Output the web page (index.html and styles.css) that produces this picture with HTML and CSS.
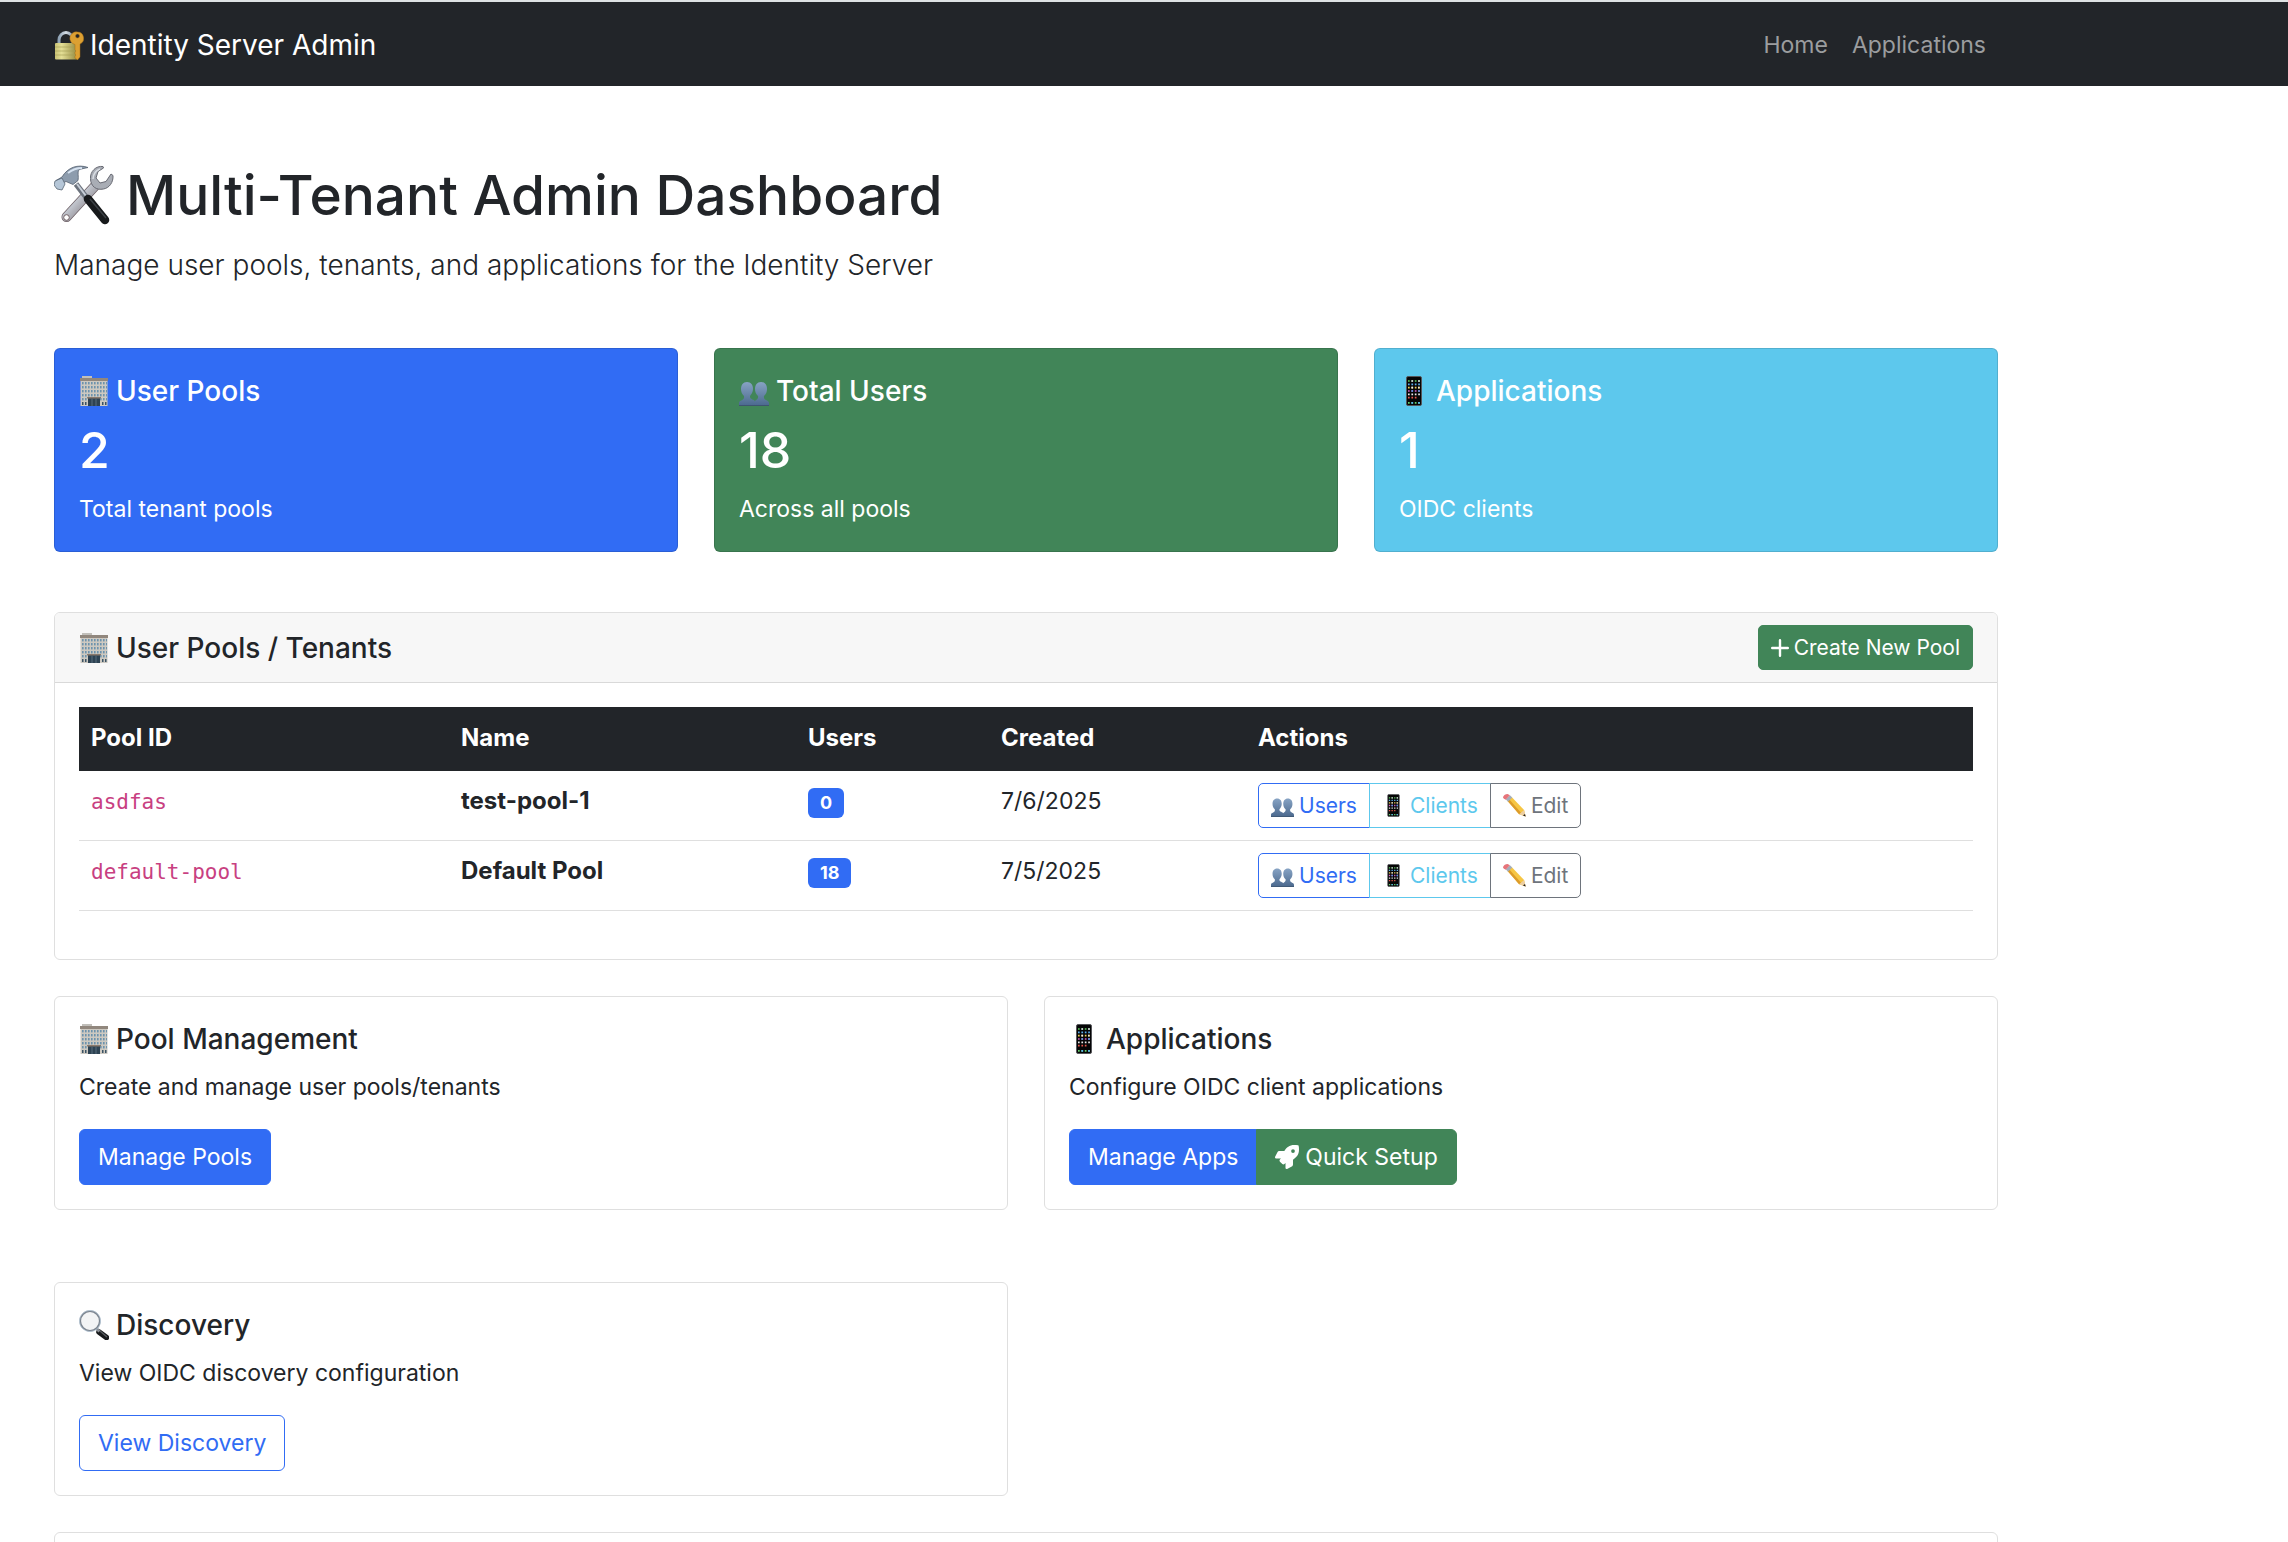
FILE: index.html
```html
<!DOCTYPE html>
<html lang="en">
<head>
<meta charset="utf-8">
<title>Identity Server Admin</title>
<link rel="stylesheet" href="styles.css">
</head>
<body>
<svg class="sprite" aria-hidden="true">
  <defs>
    <linearGradient id="steel" x1="0" y1="0" x2="1" y2="1"><stop offset="0" stop-color="#8e99a8"/><stop offset=".4" stop-color="#c3c7cf"/><stop offset="1" stop-color="#70666c"/></linearGradient>
    <linearGradient id="brass" x1="0" y1="0" x2="1" y2="0"><stop offset="0" stop-color="#c9c274"/><stop offset=".3" stop-color="#e3de95"/><stop offset="1" stop-color="#968c42"/></linearGradient>
    <linearGradient id="bust" x1="0" y1="0" x2="0" y2="1"><stop offset="0" stop-color="#87a3c4"/><stop offset="1" stop-color="#4a688d"/></linearGradient>
    <linearGradient id="shackle" x1="0" y1="0" x2="1" y2="0"><stop offset="0" stop-color="#8fa3b5"/><stop offset=".5" stop-color="#d5dde5"/><stop offset="1" stop-color="#8496a8"/></linearGradient>
    <pattern id="windows" width="3" height="4" patternUnits="userSpaceOnUse" x="2" y="5"><rect width="3" height="4" fill="#cdc9c1"/><rect x="1" y="1" width="1.6" height="2.4" fill="#6d93ad"/></pattern>
  </defs>
  <symbol id="lock" viewBox="0 0 30 30">
    <path d="M5 14V10a7 7.500 0 0 1 14 0v4" fill="none" stroke="url(#shackle)" stroke-width="3"/>
    <rect x="1" y="13" width="22" height="16.500" rx="1" fill="url(#brass)"/>
    <path d="M1 17h22M1 21h22M1 25h22" stroke="#a39b50" stroke-width=".6"/>
    <path d="M23.500 2a6.300 6.300 0 0 1 2.500 12v13l-2.500 3-2.500-2v-2l1-1-1-1v-2l1-1-1-1v-5.500A6.300 6.300 0 0 1 23.500 2Zm0 2a2 2 0 1 0 0 4 2 2 0 0 0 0-4Z" fill="#dca032" stroke="#a76f16" stroke-width=".5"/>
  </symbol>
  <symbol id="tools" viewBox="0 0 60 60">
    <path d="M12.500 52 41 21" stroke="#6e6167" stroke-width="10" stroke-linecap="round"/>
    <path d="M12.500 52 41 21" stroke="url(#steel)" stroke-width="8.500" stroke-linecap="round"/>
    <path d="M49 1.500c-7-1-13 5-12.500 12 0 8 6 12 13 10.500 6-1 10-7 9.500-13.500l-2-1.500-5 7.500-6 1.500-4-5 2-6.500 5.500-3.500Z" fill="#a9adb5" stroke="#686a73"/>
    <path d="M46 4c-5 2-7 6-7 10" stroke="#d9dde3" stroke-width="1.500" fill="none"/>
    <circle cx="12.500" cy="52.500" r="2.800" fill="#fff" stroke="#705f63"/>
    <path d="m22 19 10 13" stroke="#6b727c" stroke-width="5.500"/>
    <path d="m23 19 9 12" stroke="#c7ced7" stroke-width="2"/>
    <path d="m34 34 17 21" stroke="#17191b" stroke-width="8.500" stroke-linecap="round"/>
    <path d="m36 34 16 19" stroke="#3d4145" stroke-width="1.500"/>
    <path d="M8 12C14 2 24-1 34 2.500l-9 2c-2 3 0 7-1 11l-5 4-7-3-4 2-6-3Z" fill="#8d9cad" stroke="#566170" stroke-width=".8"/>
    <path d="m1 16 7-3 3 6-3 6-5-1-3-4Z" fill="#b5c6d7" stroke="#576474" stroke-width=".8"/>
    <path d="M14 8c5-4 9-5 14-5" stroke="#d6e2f0" stroke-width="2" fill="none"/>
  </symbol>
  <symbol id="building" viewBox="0 0 30 30">
    <path d="M3 0h10v3H3Z" fill="#c1bfba"/>
    <path d="M1 2h28v3H1Z" fill="#91877d"/>
    <path d="M1.500 5h27v25h-27Z" fill="#cdc9c1"/>
    <path d="M2 5h26v20H2Z" fill="url(#windows)"/>
    <path d="M9 22h12v8H9Z" fill="#2e4353"/>
    <path d="M8 21h14v1.500H8Z" fill="#8b7a6d"/>
    <path d="M13 23v7M17 23v7" stroke="#6c8290" stroke-width=".7"/>
    <path d="M3 26h1.500v3H3Zm3 0h1.500v3H6Zm17 0h1.500v3H23Zm3 0h1.500v3H26Z" fill="#3b5365"/>
  </symbol>
  <symbol id="people" viewBox="0 0 30 30">
    <path d="M8 6c4 0 6 3 6 7 0 3-1.500 5-3 7-.6 4 5 3 5 6v4H0v-3c0-3 6-2 5-7-2-2-3-4-3-7 0-4 2-7 6-7Z" fill="url(#bust)"/>
    <path d="M22 6c4 0 6 3 6 7 0 3-1 5-3 7-1 5 5 4 5 7v3H15v-3c0-3 5-3 4-7-2-2-3-4-3-7 0-4 2-7 6-7Z" fill="url(#bust)"/>
    <path d="M0 29.500h30" stroke="#3e546f"/>
  </symbol>
  <symbol id="phone" viewBox="0 0 30 30">
    <rect x="7.500" y=".5" width="15" height="29" rx="1.500" fill="#050506" stroke="#55565a"/>
    <g stroke-width="1.700" stroke-dasharray="1.700 1.700" fill="none">
      <path d="M9 5h13" stroke="#5fcf5f"/><path d="M12.400 5h10" stroke="#e6d9ee" stroke-dasharray="1.700 5"/>
      <path d="M9 8.300h13" stroke="#5badec"/><path d="M9 11.600h13" stroke="#f0cf51"/><path d="M12.400 11.600h8" stroke="#eee" stroke-dasharray="1.700 5"/>
      <path d="M9 15h13" stroke="#da5fc8"/><path d="M12.400 15h10" stroke="#4da2f0" stroke-dasharray="1.700 5"/>
      <path d="M9 18.300h13" stroke="#e8e8e8"/><path d="M9 21.600h10" stroke="#e5574b"/>
      <path d="M9 26.800h13" stroke="#66d06c"/><path d="M12.400 26.800h10" stroke="#59b3f2" stroke-dasharray="1.700 5"/>
    </g>
  </symbol>
  <symbol id="pencil" viewBox="0 0 30 30">
    <path d="m6 9 5-5.500L27.500 21 29.500 29.500 21 26.500Z" fill="#f6c644"/>
    <path d="m6 9 2-2 16 18-3 1.500Z" fill="#dc9b2a"/>
    <path d="m21 26.500 6.500-5.500 2 8.500Z" fill="#edcfa2"/><path d="m26 28.200 2.700-2.200.8 3.500Z" fill="#27211e"/>
    <path d="M3.500 7 9 1.500l3 3L6.500 10Z" fill="#a3aebb"/><path d="M0 5C0 2 3 0 6 0l3 1.500L3.500 7.500 1 6Z" fill="#e6747a"/>
  </symbol>
  <symbol id="magnifier" viewBox="0 0 30 30">
    <path d="m20 22 7.500 5.500" stroke="#17191b" stroke-width="5.500" stroke-linecap="round"/>
    <path d="m17.500 18.500 3 3" stroke="#8a8f96" stroke-width="3"/>
    <path d="m21 21 7 6" stroke="#5b5f64" stroke-width="1.200"/>
    <circle cx="11" cy="11" r="9.800" fill="#f3f4f5" stroke="#7d858f" stroke-width="1.800"/>
    <circle cx="11" cy="11" r="10.600" fill="none" stroke="#b9cbdc" stroke-width=".7"/>
  </symbol>
</svg>

<nav class="navbar">
  <div class="container navbar-inner">
    <a class="brand" href="#"><svg class="emoji"><use href="#lock"/></svg>Identity Server Admin</a>
    <div class="nav-links"><a href="#">Home</a><a href="#">Applications</a></div>
  </div>
</nav>

<main class="container main">
  <header class="intro">
    <h1><svg class="emoji"><use href="#tools"/></svg>Multi-Tenant Admin Dashboard</h1>
    <p>Manage user pools, tenants, and applications for the Identity Server</p>
  </header>

  <section class="stats">
    <article class="card stat blue">
      <h2 class="card-title"><svg class="emoji"><use href="#building"/></svg>User Pools</h2>
      <p class="figure">2</p>
      <p>Total tenant pools</p>
    </article>
    <article class="card stat green">
      <h2 class="card-title"><svg class="emoji"><use href="#people"/></svg>Total Users</h2>
      <p class="figure">18</p>
      <p>Across all pools</p>
    </article>
    <article class="card stat cyan">
      <h2 class="card-title"><svg class="emoji"><use href="#phone"/></svg>Applications</h2>
      <p class="figure">1</p>
      <p>OIDC clients</p>
    </article>
  </section>

  <section class="card pools">
    <div class="card-header">
      <h2 class="card-title"><svg class="emoji"><use href="#building"/></svg>User Pools / Tenants</h2>
      <button class="btn btn-sm green" type="button"><svg class="plus" viewBox="0 0 18 18"><path d="M9 1.200v15.600M1.200 9h15.600"/></svg>Create New Pool</button>
    </div>
    <div class="card-body">
      <table class="pool-table">
        <colgroup><col class="col-id"><col class="col-name"><col class="col-users"><col class="col-created"><col></colgroup>
        <thead><tr><th>Pool ID</th><th>Name</th><th>Users</th><th>Created</th><th>Actions</th></tr></thead>
        <tbody>
          <tr>
            <td><code>asdfas</code></td><td><strong>test-pool-1</strong></td><td><span class="badge">0</span></td><td>7/6/2025</td>
            <td><div class="btn-group">
              <button class="btn btn-sm outline-blue" type="button"><svg class="emoji"><use href="#people"/></svg>Users</button>
              <button class="btn btn-sm outline-cyan" type="button"><svg class="emoji"><use href="#phone"/></svg>Clients</button>
              <button class="btn btn-sm outline-gray" type="button"><svg class="emoji"><use href="#pencil"/></svg>Edit</button>
            </div></td>
          </tr>
          <tr>
            <td><code>default-pool</code></td><td><strong>Default Pool</strong></td><td><span class="badge">18</span></td><td>7/5/2025</td>
            <td><div class="btn-group">
              <button class="btn btn-sm outline-blue" type="button"><svg class="emoji"><use href="#people"/></svg>Users</button>
              <button class="btn btn-sm outline-cyan" type="button"><svg class="emoji"><use href="#phone"/></svg>Clients</button>
              <button class="btn btn-sm outline-gray" type="button"><svg class="emoji"><use href="#pencil"/></svg>Edit</button>
            </div></td>
          </tr>
        </tbody>
      </table>
    </div>
  </section>

  <section class="tiles">
    <article class="card tile">
      <h2 class="card-title"><svg class="emoji"><use href="#building"/></svg>Pool Management</h2>
      <p>Create and manage user pools/tenants</p>
      <div class="btn-group"><button class="btn blue" type="button">Manage Pools</button></div>
    </article>
    <article class="card tile">
      <h2 class="card-title"><svg class="emoji"><use href="#phone"/></svg>Applications</h2>
      <p>Configure OIDC client applications</p>
      <div class="btn-group">
        <button class="btn blue" type="button">Manage Apps</button>
        <button class="btn green" type="button"><svg class="rocket" viewBox="0 0 512 512"><path d="M505.120 19.094c-1.189-5.531-6.658-11-12.207-12.188C460.716 0 435.507 0 410.407 0 307.175 0 245.269 55.203 199.052 128H94.838c-16.348.016-35.557 11.875-42.887 26.484L2.516 253.297A28.400 28.400 0 0 0 0 264a24 24 0 0 0 24 24h103.816l-22.474 22.469c-11.365 11.361-12.996 32.258 0 45.250l50.904 50.906c11.156 11.188 32.156 13.156 45.277 0l22.475-22.469V488a24 24 0 0 0 24 24 28.560 28.560 0 0 0 10.707-2.516l98.728-49.390c14.629-7.297 26.508-26.500 26.508-42.860V312.797c72.598-46.313 128.035-108.406 128.035-211.094.099-25.203.099-50.406-6.856-82.609ZM384.040 168a40 40 0 1 1 40-40 40 40 0 0 1-40 40Z"/></svg>Quick Setup</button>
      </div>
    </article>
  </section>

  <section class="tiles">
    <article class="card tile">
      <h2 class="card-title"><svg class="emoji"><use href="#magnifier"/></svg>Discovery</h2>
      <p>View OIDC discovery configuration</p>
      <div class="btn-group"><button class="btn outline-blue" type="button">View Discovery</button></div>
    </article>
  </section>

  <section class="card tile"></section>
</main>
</body>
</html>
```
FILE: styles.css
```css
:root {
  --blue: #316cf4;
  --green: #418558;
  --cyan: #5dc8ed;
  --dark: #222529;
  --gray: #6e747c;
  --line: #dfdfdf;
}

* { box-sizing: border-box; }

body {
  margin: 0;
  height: 100vh;
  overflow: hidden;
  border-top: 2px solid #dee2e3;
  background: #fff;
  color: var(--dark);
  font: 400 23px/36px Inter, "Liberation Sans", sans-serif;
}

h1, h2, p { margin: 0; }
a { color: inherit; text-decoration: none; }

.sprite { position: absolute; width: 0; height: 0; }
.emoji { flex: none; width: 30px; height: 30px; }

.container {
  max-width: 1980px;
  margin-left: 36px;
  padding: 0 18px;
}

.navbar { background: var(--dark); }
.navbar-inner {
  display: flex;
  align-items: center;
  justify-content: space-between;
  height: 84px;
  padding-top: 2px;
}
.brand {
  display: flex;
  align-items: center;
  gap: 6px;
  color: #fff;
  font-size: 28px;
}
.nav-links { display: flex; color: #9b9d9f; }
.nav-links a { padding: 0 12px; }

.main { padding-top: 73px; }

.intro { margin-bottom: 60px; }
.intro h1 {
  display: flex;
  align-items: center;
  gap: 12px;
  margin-bottom: 12px;
  font-size: 55px;
  font-weight: 500;
  line-height: 72px;
}
.intro h1 .emoji { width: 60px; height: 60px; }
.intro p { font-size: 28px; font-weight: 350; line-height: 45px; }

.card { border: 1px solid var(--line); border-radius: 6px; }
.card-title {
  display: flex;
  align-items: center;
  gap: 7px;
  font-size: 28px;
  font-weight: 500;
}

.blue { background: var(--blue); border-color: var(--blue); color: #fff; }
.green { background: var(--green); border-color: var(--green); color: #fff; }
.cyan { background: var(--cyan); border-color: var(--cyan); color: #fff; }
.outline-blue { border-color: var(--blue); color: var(--blue); }
.outline-cyan { border-color: var(--cyan); color: var(--cyan); }
.outline-gray { border-color: var(--gray); color: var(--gray); }

.stats {
  display: grid;
  grid-template-columns: repeat(3, 1fr);
  gap: 36px;
  margin-bottom: 60px;
}
.stat {
  padding: 24px;
  border-color: rgba(0, 0, 0, 0.125);
}
.figure {
  margin: 12px 0;
  font-size: 50px;
  font-weight: 500;
  line-height: 58px;
}

.pools { margin-bottom: 36px; }
.card-header {
  display: flex;
  align-items: center;
  justify-content: space-between;
  padding: 12px 24px;
  border-bottom: 1px solid #d9d9d9;
  border-radius: 5px 5px 0 0;
  background: #f7f7f7;
}
.card-body { padding: 24px 24px 48px; }

.pool-table {
  width: 100%;
  border-collapse: separate;
  border-spacing: 0;
  table-layout: fixed;
}
.col-id { width: 370px; }
.col-name { width: 347px; }
.col-users { width: 193px; }
.col-created { width: 257px; }
.pool-table th {
  padding: 13px 12px 15px;
  background: var(--dark);
  color: #fff;
  font-size: 24px;
  font-weight: 700;
  text-align: left;
}
.pool-table td {
  padding: 12px;
  border-bottom: 1px solid var(--line);
  vertical-align: top;
}
.pool-table strong { font-size: 24px; font-weight: 700; }
.pool-table code {
  color: #c84081;
  font-family: "DejaVu Sans Mono", "Liberation Mono", monospace;
  font-size: 21px;
}

.badge {
  display: inline-block;
  padding: 6px 12px;
  border-radius: 6px;
  background: var(--blue);
  color: #fff;
  font-size: 18px;
  font-weight: 700;
  line-height: 18px;
}

.btn {
  display: flex;
  align-items: center;
  gap: 6px;
  padding: 9px 18px;
  border-width: 1px;
  border-style: solid;
  border-radius: 6px;
  font: inherit;
  white-space: nowrap;
  cursor: pointer;
}
.btn:not(.blue):not(.green) { background: #fff; }
.btn-sm {
  gap: 5px;
  padding: 6px 12px;
  border-radius: 5px;
  font-size: 21px;
  line-height: 31px;
}
.btn-sm .emoji { width: 23px; height: 23px; }
.plus {
  width: 18px;
  height: 18px;
  fill: none;
  stroke: currentColor;
  stroke-width: 2.400;
  stroke-linecap: round;
}
.rocket { width: 24px; height: 24px; fill: currentColor; }

.btn-group { display: flex; }
.btn-group .btn:not(:first-child) {
  margin-left: -1px;
  border-top-left-radius: 0;
  border-bottom-left-radius: 0;
}
.btn-group .btn:not(:last-child) {
  border-top-right-radius: 0;
  border-bottom-right-radius: 0;
}

.tiles {
  display: grid;
  grid-template-columns: repeat(2, 1fr);
  gap: 36px;
  margin-bottom: 72px;
}
.tiles + .tiles { margin-bottom: 36px; }
.tile { padding: 24px; }
.tile p { margin: 12px 0 24px; }
```
